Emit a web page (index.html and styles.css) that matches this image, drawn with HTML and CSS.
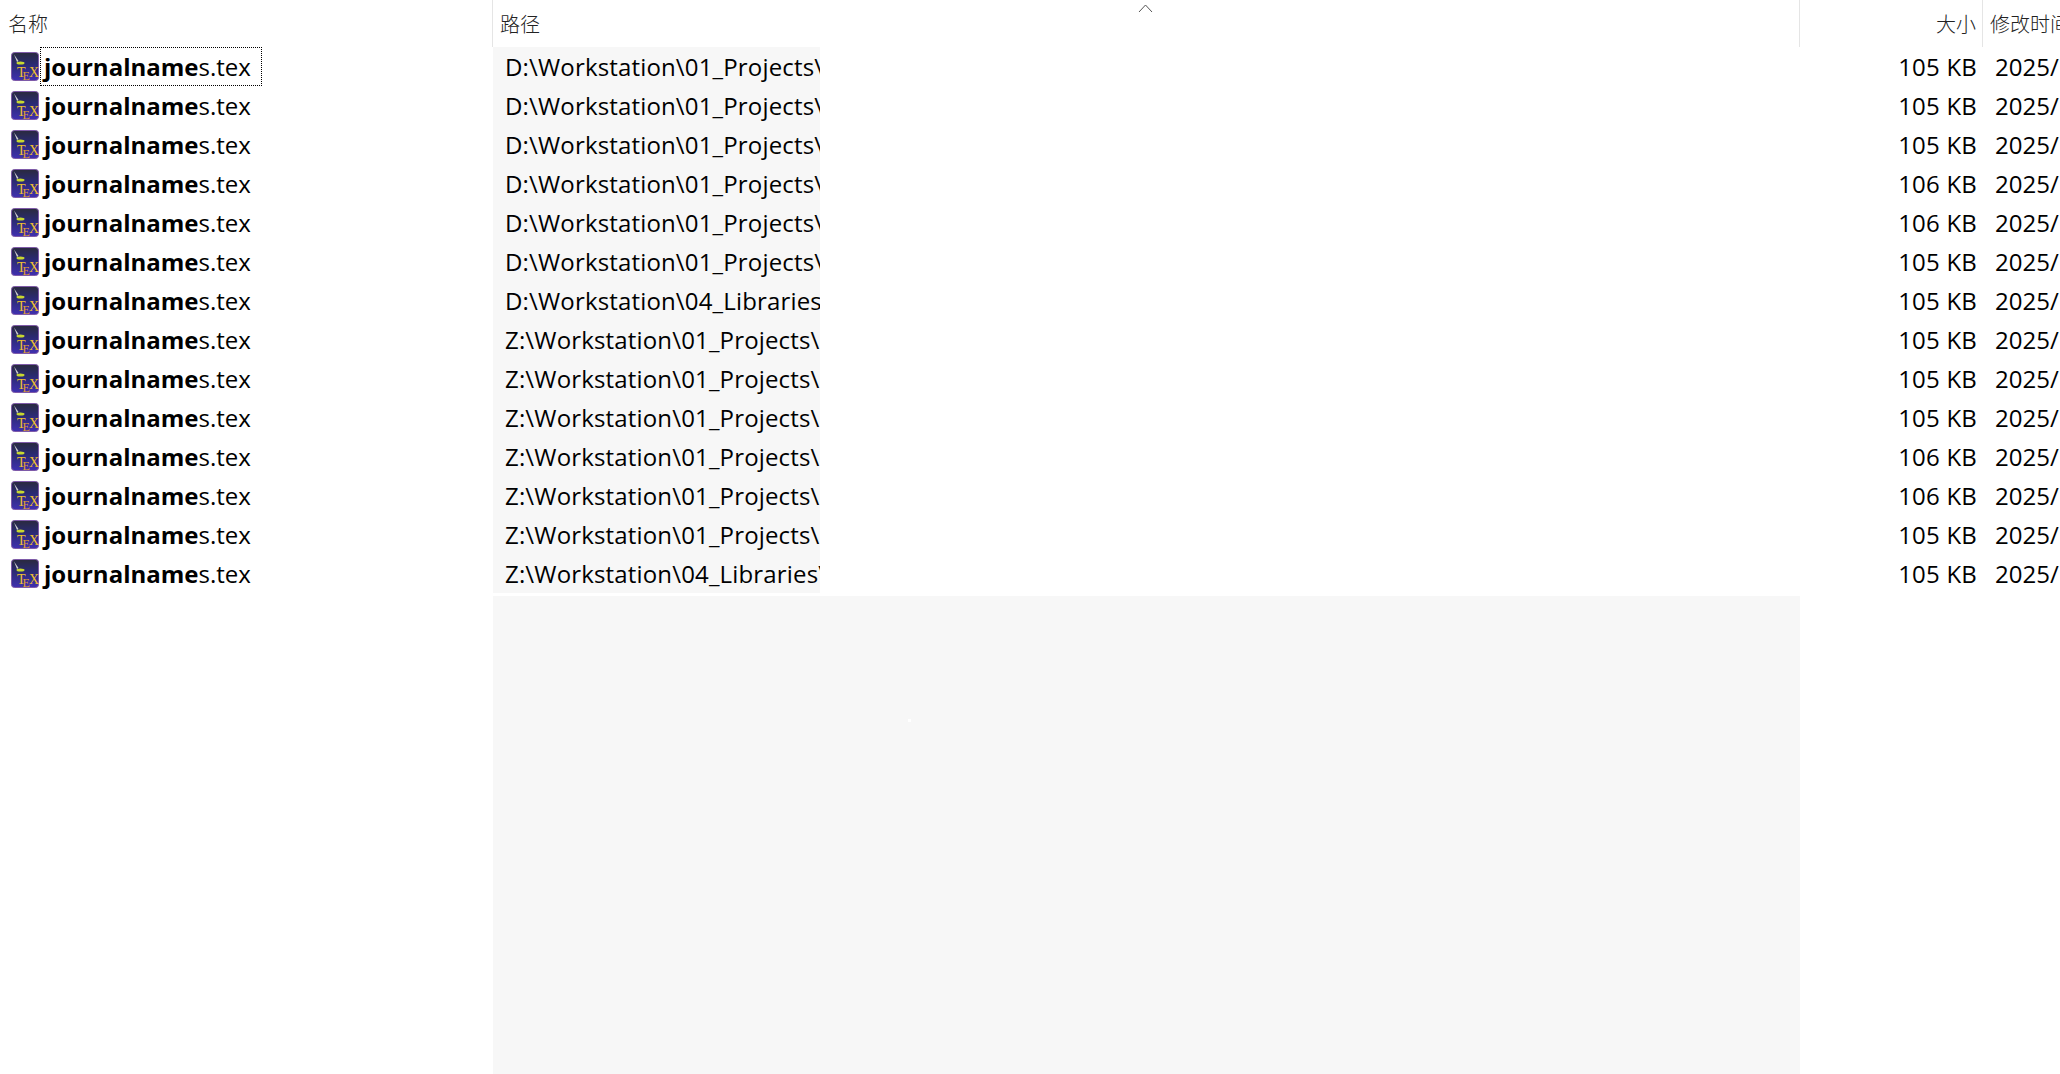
FILE: index.html
```html
<!DOCTYPE html>
<html lang="zh-CN">
<head>
<meta charset="UTF-8">
<meta name="viewport" content="width=device-width, initial-scale=1.0">
<title>搜索结果</title>
<link rel="stylesheet" href="styles.css">
</head>
<body>
<svg class="defs" width="0" height="0">
  <defs>
    <linearGradient id="texBg" x1="0" y1="0" x2="0" y2="1">
      <stop offset="0" stop-color="#2a2a3e"/>
      <stop offset="0.4" stop-color="#2a2a70"/>
      <stop offset="1" stop-color="#4030b0"/>
    </linearGradient>
    <symbol id="texIcon" viewBox="0 0 28 29">
      <rect x="0.5" y="0.5" width="27" height="28" rx="3" fill="url(#texBg)" stroke="#7e5aa8"/>
      <path d="M3 2.500l4.500 6.500-1.500 1z" fill="#d0d0d0"/>
      <ellipse cx="9.500" cy="11" rx="4" ry="1.500" fill="#c8d830"/>
      <text x="6" y="25" class="tex-t">T</text>
      <text x="11.500" y="27.500" class="tex-e">E</text>
      <text x="18" y="25" class="tex-t">X</text>
    </symbol>
  </defs>
</svg>

<div class="page">
  <div class="header">
    <div class="head-cell">名称</div>
    <div class="head-cell head-sorted">
      路径
      <svg class="sort-arrow" width="15" height="9" viewBox="0 0 15 9"><path d="M1 8l6.500-7 6.500 7" fill="none" stroke="#555" stroke-width="1"/></svg>
    </div>
    <div class="head-cell head-size">大小</div>
    <div class="head-cell head-date">修改时间</div>
  </div>

  <div class="list">
    <div class="row">
      <div class="cell-name"><svg class="icon"><use href="#texIcon"/></svg><span class="name focused"><b>journalname</b>s.tex</span></div>
      <div class="cell-path">D:\Workstation\01_Projects\</div>
      <div class="cell-size">105 KB</div>
      <div class="cell-date">2025/</div>
    </div>
    <div class="row">
      <div class="cell-name"><svg class="icon"><use href="#texIcon"/></svg><span class="name"><b>journalname</b>s.tex</span></div>
      <div class="cell-path">D:\Workstation\01_Projects\</div>
      <div class="cell-size">105 KB</div>
      <div class="cell-date">2025/</div>
    </div>
    <div class="row">
      <div class="cell-name"><svg class="icon"><use href="#texIcon"/></svg><span class="name"><b>journalname</b>s.tex</span></div>
      <div class="cell-path">D:\Workstation\01_Projects\</div>
      <div class="cell-size">105 KB</div>
      <div class="cell-date">2025/</div>
    </div>
    <div class="row">
      <div class="cell-name"><svg class="icon"><use href="#texIcon"/></svg><span class="name"><b>journalname</b>s.tex</span></div>
      <div class="cell-path">D:\Workstation\01_Projects\</div>
      <div class="cell-size">106 KB</div>
      <div class="cell-date">2025/</div>
    </div>
    <div class="row">
      <div class="cell-name"><svg class="icon"><use href="#texIcon"/></svg><span class="name"><b>journalname</b>s.tex</span></div>
      <div class="cell-path">D:\Workstation\01_Projects\</div>
      <div class="cell-size">106 KB</div>
      <div class="cell-date">2025/</div>
    </div>
    <div class="row">
      <div class="cell-name"><svg class="icon"><use href="#texIcon"/></svg><span class="name"><b>journalname</b>s.tex</span></div>
      <div class="cell-path">D:\Workstation\01_Projects\</div>
      <div class="cell-size">105 KB</div>
      <div class="cell-date">2025/</div>
    </div>
    <div class="row">
      <div class="cell-name"><svg class="icon"><use href="#texIcon"/></svg><span class="name"><b>journalname</b>s.tex</span></div>
      <div class="cell-path">D:\Workstation\04_Libraries\</div>
      <div class="cell-size">105 KB</div>
      <div class="cell-date">2025/</div>
    </div>
    <div class="row">
      <div class="cell-name"><svg class="icon"><use href="#texIcon"/></svg><span class="name"><b>journalname</b>s.tex</span></div>
      <div class="cell-path">Z:\Workstation\01_Projects\</div>
      <div class="cell-size">105 KB</div>
      <div class="cell-date">2025/</div>
    </div>
    <div class="row">
      <div class="cell-name"><svg class="icon"><use href="#texIcon"/></svg><span class="name"><b>journalname</b>s.tex</span></div>
      <div class="cell-path">Z:\Workstation\01_Projects\</div>
      <div class="cell-size">105 KB</div>
      <div class="cell-date">2025/</div>
    </div>
    <div class="row">
      <div class="cell-name"><svg class="icon"><use href="#texIcon"/></svg><span class="name"><b>journalname</b>s.tex</span></div>
      <div class="cell-path">Z:\Workstation\01_Projects\</div>
      <div class="cell-size">105 KB</div>
      <div class="cell-date">2025/</div>
    </div>
    <div class="row">
      <div class="cell-name"><svg class="icon"><use href="#texIcon"/></svg><span class="name"><b>journalname</b>s.tex</span></div>
      <div class="cell-path">Z:\Workstation\01_Projects\</div>
      <div class="cell-size">106 KB</div>
      <div class="cell-date">2025/</div>
    </div>
    <div class="row">
      <div class="cell-name"><svg class="icon"><use href="#texIcon"/></svg><span class="name"><b>journalname</b>s.tex</span></div>
      <div class="cell-path">Z:\Workstation\01_Projects\</div>
      <div class="cell-size">106 KB</div>
      <div class="cell-date">2025/</div>
    </div>
    <div class="row">
      <div class="cell-name"><svg class="icon"><use href="#texIcon"/></svg><span class="name"><b>journalname</b>s.tex</span></div>
      <div class="cell-path">Z:\Workstation\01_Projects\</div>
      <div class="cell-size">105 KB</div>
      <div class="cell-date">2025/</div>
    </div>
    <div class="row">
      <div class="cell-name"><svg class="icon"><use href="#texIcon"/></svg><span class="name"><b>journalname</b>s.tex</span></div>
      <div class="cell-path">Z:\Workstation\04_Libraries\</div>
      <div class="cell-size">105 KB</div>
      <div class="cell-date">2025/</div>
    </div>
  </div>

  <!-- Rest of the sorted column, below the last row -->
  <div class="filler"><span class="speck"></span></div>
</div>
</body>
</html>
```

FILE: styles.css
```css
html, body { margin: 0; height: 100%; overflow: hidden; background: #fff; }
body { font-family: "Open Sans", "Noto Sans", sans-serif; color: #000; }
.defs { display: block; height: 0; }

.page { display: flex; flex-direction: column; height: 1074px; }

/* Column header */
.header {
  display: grid;
  grid-template-columns: 493px 1307px 183px 1fr;
  height: 47px;
  font-family: "Noto Sans CJK SC", sans-serif;
  font-weight: 300;
  font-size: 20px;
  color: #222;
}
.head-cell {
  position: relative;
  display: flex;
  align-items: center;
  box-sizing: border-box;
  padding: 0 0 0 8px;
  border-right: 1px solid #e5e5e5;
  white-space: nowrap;
  overflow: hidden;
}
.head-sorted { padding-left: 7px; }
.head-size { justify-content: flex-end; padding-right: 6px; }
.head-date { border-right: 0; padding-left: 7px; }
.sort-arrow { position: absolute; left: 645px; top: 4px; }

/* Result rows */
.list { padding-bottom: 3px; }
.row {
  display: grid;
  grid-template-columns: 493px 327px 980px 182px 1fr;
  height: 39px;
  font-size: 24px;
  line-height: 39px;
  white-space: nowrap;
}
.cell-name { display: flex; align-items: center; padding-left: 11px; }
.icon { width: 28px; height: 29px; flex: none; }
.name {
  display: block;
  box-sizing: border-box;
  height: 39px;
  line-height: 37px;
  margin-left: 1px;
  padding: 0 10px 0 3px;
  border: 1px dotted transparent;
}
.name b { font-weight: 700; }
.focused { border-color: #000; }

.cell-path {
  box-sizing: border-box;
  padding-left: 12px;
  background: #f7f7f7;
  letter-spacing: 0.16px;
  overflow: hidden;
}
.cell-size { grid-column: 4; text-align: right; padding-right: 5px; letter-spacing: 0.2px; }
.cell-date { padding-left: 13px; overflow: hidden; }

.filler {
  position: relative;
  flex: 1;
  margin-left: 493px;
  width: 1307px;
  background: #f7f7f7;
}
.speck {
  position: absolute;
  left: 415px;
  top: 123px;
  width: 3px;
  height: 3px;
  background: #fff;
}

.tex-t { font-family: "Liberation Serif", serif; font-size: 14px; fill: #eec030; }
.tex-e { font-family: "Liberation Serif", serif; font-size: 12px; fill: #e0a030; }
```
